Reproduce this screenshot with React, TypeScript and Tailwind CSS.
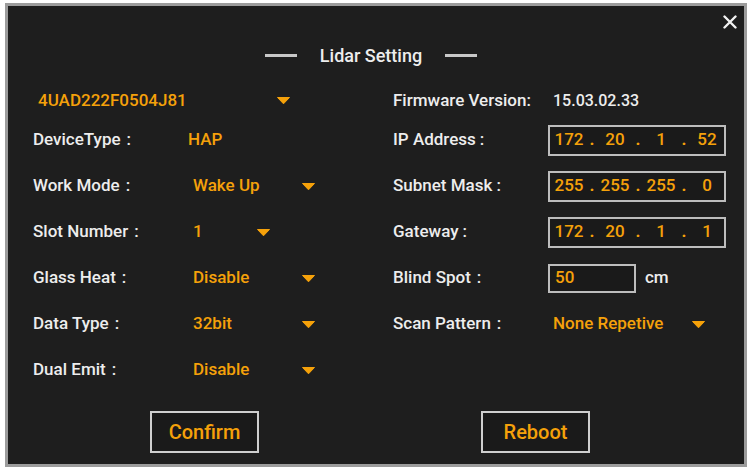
import React from "react";

const ORANGE = "text-[#f5a10a]";

function Arrow() {
  return (
    <svg width="13" height="7" viewBox="0 0 13 7" className="shrink-0">
      <polygon points="0.5,0.5 12.5,0.5 6.5,6.8" fill="#f5a10a" stroke="#f5a10a" strokeWidth="1" strokeLinejoin="round" />
    </svg>
  );
}

function Drop({ value, w }: { value: string; w: string }) {
  return (
    <div className="flex items-center">
      <span className={`${w} ${ORANGE}`}>{value}</span>
      <Arrow />
    </div>
  );
}

function IpBox({ parts }: { parts: string[] }) {
  return (
    <div className="flex h-[31px] w-[178px] items-center border-2 border-[#bdbdbd] bg-[#1a1a1a] pl-[2px]">
      {parts.map((p, i) => (
        <React.Fragment key={i}>
          <span className={`w-[34px] text-center ${ORANGE}`}>{p}</span>
          {i < parts.length - 1 && (
            <span className={`w-[12px] text-center font-bold ${ORANGE}`}>.</span>
          )}
        </React.Fragment>
      ))}
    </div>
  );
}

export default function App() {
  return (
    <div className="h-[471px] w-[752px] bg-white pl-[5px] pt-[3px]">
      <div
        className="relative h-[464px] w-[742px] border-[3px] border-[#9c9c9c] bg-[#1e1e1e] text-[17px] font-medium text-[#ededed]"
        style={{ fontFamily: "Roboto, 'Liberation Sans', sans-serif" }}
      >
        <svg
          width="14"
          height="14"
          viewBox="0 0 14 14"
          className="absolute right-[7px] top-[9px]"
        >
          <path d="M1.5 1.5 L12.5 12.5 M12.5 1.5 L1.5 12.5" stroke="#f2f2f2" strokeWidth="2.4" strokeLinecap="round" />
        </svg>

        <div className="mt-[35px] flex h-[28px] items-center justify-center pr-[10px]">
          <div className="h-[3px] w-[32px] bg-[#c8c8c8]" />
          <span className="mx-[23px] text-[18px]">Lidar Setting</span>
          <div className="h-[3px] w-[32px] bg-[#c8c8c8]" />
        </div>

        <div className="mt-[15px] grid grid-cols-[360px_1fr] pl-[25px]">
          {/* row 1 */}
          <div className="flex h-[33px] items-center pl-[5px]">
            <Drop value="4UAD222F0504J81" w="w-[239px]" />
          </div>
          <div className="flex h-[33px] items-center">
            <span className="w-[160px]">Firmware Version:</span>
            <span className="text-[16px]">15.03.02.33</span>
          </div>

          {/* row 2 */}
          <div className="flex h-[46px] items-center">
            <span className="w-[155px]">DeviceType<span className="ml-[6px]">:</span></span>
            <span className={ORANGE}>HAP</span>
          </div>
          <div className="flex h-[46px] items-center">
            <span className="w-[155px]">IP Address<span className="ml-[4px]">:</span></span>
            <IpBox parts={["172", "20", "1", "52"]} />
          </div>

          {/* row 3 */}
          <div className="flex h-[46px] items-center">
            <span className="w-[160px]">Work Mode<span className="ml-[6px]">:</span></span>
            <Drop value="Wake Up" w="w-[109px]" />
          </div>
          <div className="flex h-[46px] items-center">
            <span className="w-[155px]">Subnet Mask<span className="ml-[4px]">:</span></span>
            <IpBox parts={["255", "255", "255", "0"]} />
          </div>

          {/* row 4 */}
          <div className="flex h-[46px] items-center">
            <span className="w-[160px]">Slot Number<span className="ml-[6px]">:</span></span>
            <Drop value="1" w="w-[64px]" />
          </div>
          <div className="flex h-[46px] items-center">
            <span className="w-[155px]">Gateway<span className="ml-[4px]">:</span></span>
            <IpBox parts={["172", "20", "1", "1"]} />
          </div>

          {/* row 5 */}
          <div className="flex h-[46px] items-center">
            <span className="w-[160px]">Glass Heat<span className="ml-[6px]">:</span></span>
            <Drop value="Disable" w="w-[109px]" />
          </div>
          <div className="flex h-[46px] items-center">
            <span className="w-[155px]">Blind Spot<span className="ml-[6px]">:</span></span>
            <div className="flex h-[29px] w-[88px] items-center border-2 border-[#bdbdbd] bg-[#1a1a1a] pl-[5px]">
              <span className={ORANGE}>50</span>
            </div>
            <span className="ml-[9px]">cm</span>
          </div>

          {/* row 6 */}
          <div className="flex h-[46px] items-center">
            <span className="w-[160px]">Data Type<span className="ml-[6px]">:</span></span>
            <Drop value="32bit" w="w-[109px]" />
          </div>
          <div className="flex h-[46px] items-center">
            <span className="w-[160px]">Scan Pattern<span className="ml-[6px]">:</span></span>
            <Drop value="None Repetive" w="w-[139px]" />
          </div>

          {/* row 7 */}
          <div className="flex h-[46px] items-center">
            <span className="w-[160px]">Dual Emit<span className="ml-[6px]">:</span></span>
            <Drop value="Disable" w="w-[109px]" />
          </div>
          <div className="h-[46px]" />
        </div>

        <div className="mt-[18px] flex pl-[142px]">
          <button className={`flex h-[42px] w-[109px] items-center justify-center border-2 border-[#cfcfcf] bg-[#1a1a1a] text-[20px] font-medium ${ORANGE}`}>
            Confirm
          </button>
          <button className={`ml-[222px] flex h-[42px] w-[109px] items-center justify-center border-2 border-[#cfcfcf] bg-[#1a1a1a] text-[20px] font-medium ${ORANGE}`}>
            Reboot
          </button>
        </div>
      </div>
    </div>
  );
}
